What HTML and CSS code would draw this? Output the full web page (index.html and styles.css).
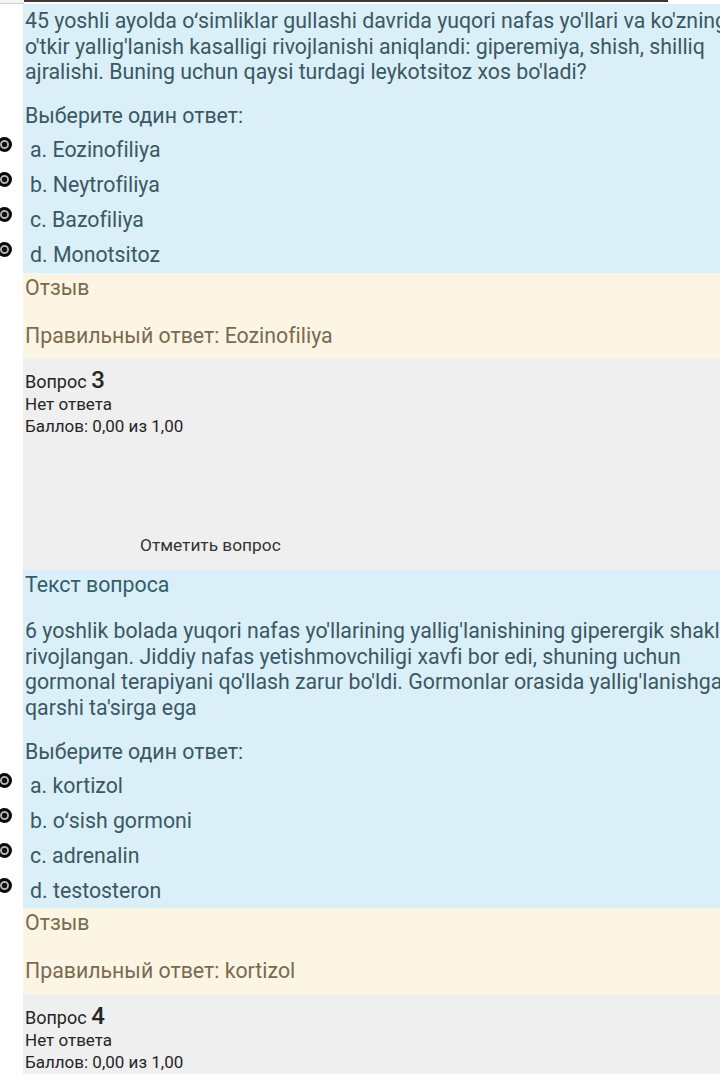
FILE: index.html
```html
<!DOCTYPE html>
<html lang="ru">
<head>
<meta charset="utf-8">
<link rel="stylesheet" href="styles.css">
</head>
<body>
<div class="topbar"><div class="topleft"></div><div class="topline"></div></div>
<div class="page">
  <div class="formulation first">
    <div class="qtext">45 yoshli ayolda oʻsimliklar gullashi davrida yuqori nafas yo'llari va ko'zning o'tkir yallig'lanish kasalligi rivojlanishi aniqlandi: giperemiya, shish, shilliq ajralishi. Buning uchun qaysi turdagi leykotsitoz xos bo'ladi?</div>
    <div class="prompt">Выберите один ответ:</div>
    <div class="answers">
      <div class="opt"><span class="radio"></span><span class="label">a. Eozinofiliya</span></div>
      <div class="opt"><span class="radio"></span><span class="label">b. Neytrofiliya</span></div>
      <div class="opt"><span class="radio"></span><span class="label">c. Bazofiliya</span></div>
      <div class="opt"><span class="radio"></span><span class="label">d. Monotsitoz</span></div>
    </div>
  </div>
  <div class="outcome">
    <div class="fb-title">Отзыв</div>
    <div class="fb-right">Правильный ответ: Eozinofiliya</div>
  </div>

  <div class="info tall">
    <div class="qno">Вопрос <span class="num">3</span></div>
    <div class="state">Нет ответа</div>
    <div class="grade">Баллов: 0,00 из 1,00</div>
    <div class="flag">Отметить вопрос</div>
  </div>

  <div class="formulation">
    <h4 class="qhead">Текст вопроса</h4>
    <div class="qtext">6 yoshlik bolada yuqori nafas yo'llarining yallig'lanishining giperergik shakli rivojlangan. Jiddiy nafas yetishmovchiligi xavfi bor edi, shuning uchun gormonal terapiyani qo'llash zarur bo'ldi. Gormonlar orasida yallig'lanishga qarshi ta'sirga ega</div>
    <div class="prompt">Выберите один ответ:</div>
    <div class="answers">
      <div class="opt"><span class="radio"></span><span class="label">a. kortizol</span></div>
      <div class="opt"><span class="radio"></span><span class="label">b. oʻsish gormoni</span></div>
      <div class="opt"><span class="radio"></span><span class="label">c. adrenalin</span></div>
      <div class="opt"><span class="radio"></span><span class="label">d. testosteron</span></div>
    </div>
  </div>
  <div class="outcome">
    <div class="fb-title">Отзыв</div>
    <div class="fb-right">Правильный ответ: kortizol</div>
  </div>

  <div class="info short">
    <div class="qno">Вопрос <span class="num">4</span></div>
    <div class="state">Нет ответа</div>
    <div class="grade">Баллов: 0,00 из 1,00</div>
  </div>
</div>
</body>
</html>
```

FILE: styles.css
```css
html, body {
  margin: 0;
  padding: 0;
  background: #ffffff;
  overflow: hidden;
}
body {
  font-family: Roboto, "Noto Sans", "Liberation Sans", sans-serif;
  font-variant-ligatures: none;
  width: 720px;
  height: 1082px;
}
.topbar {
  display: flex;
  align-items: flex-start;
  height: 4px;
}
.topleft {
  width: 24px;
  height: 3px;
  background: #f4f4f4;
  border-bottom: 1px solid #d0d0d0;
}
.topline {
  width: 644px;
  height: 2px;
  background: #3a3a3a;
}
.page {
  width: 731px;
  padding-left: 23px;
}
.formulation {
  background: #daeff8;
  color: #3a5862;
  padding: 0 2px 0 2px;
  font-size: 21.3px;
}
.formulation.first {
  padding-top: 4px;
}
.qtext {
  font-size: 21.3px;
  line-height: 25.7px;
}
.qhead {
  margin: 0;
  font-weight: 400;
  font-size: 21.3px;
  line-height: 25.7px;
  color: #30606c;
  padding-top: 2px;
  margin-bottom: 20px;
}
.prompt {
  font-size: 21.3px;
  line-height: 25.7px;
  margin-top: 18px;
  margin-bottom: 4px;
}
.answers {
  display: flex;
  flex-direction: column;
}
.opt {
  display: flex;
  align-items: center;
  height: 35px;
  font-size: 21.3px;
  line-height: 25.7px;
}
.radio {
  flex: none;
  width: 9px;
  height: 9px;
  border: 3px solid #0a0a0a;
  border-radius: 50%;
  background: radial-gradient(circle, #111 0 2.4px, #b5b5b5 3px 100%);
  margin-left: -28px;
  margin-right: 18px;
  margin-bottom: 11px;
}
.label {
  color: #3a5862;
}
.outcome {
  background: #fdf5e3;
  color: #7a6a52;
  padding: 2px 2px 10px 2px;
  font-size: 21.3px;
  line-height: 25.7px;
}
.fb-right {
  margin-top: 22px;
}
.info {
  background: #efefef;
  color: #252525;
  padding: 10px 2px 0 2px;
  font-size: 17px;
  line-height: 22px;
  box-sizing: border-box;
}
.info.tall {
  height: 212px;
}
.info.short {
  height: 80px;
}
.qno {
  height: 25px;
  line-height: 28px;
  font-size: 18px;
}
.num {
  font-size: 24px;
  line-height: 24px;
  font-weight: 500;
}
.flag {
  margin-top: 97px;
  padding-left: 115px;
  font-size: 17.3px;
  color: #333;
}
```
